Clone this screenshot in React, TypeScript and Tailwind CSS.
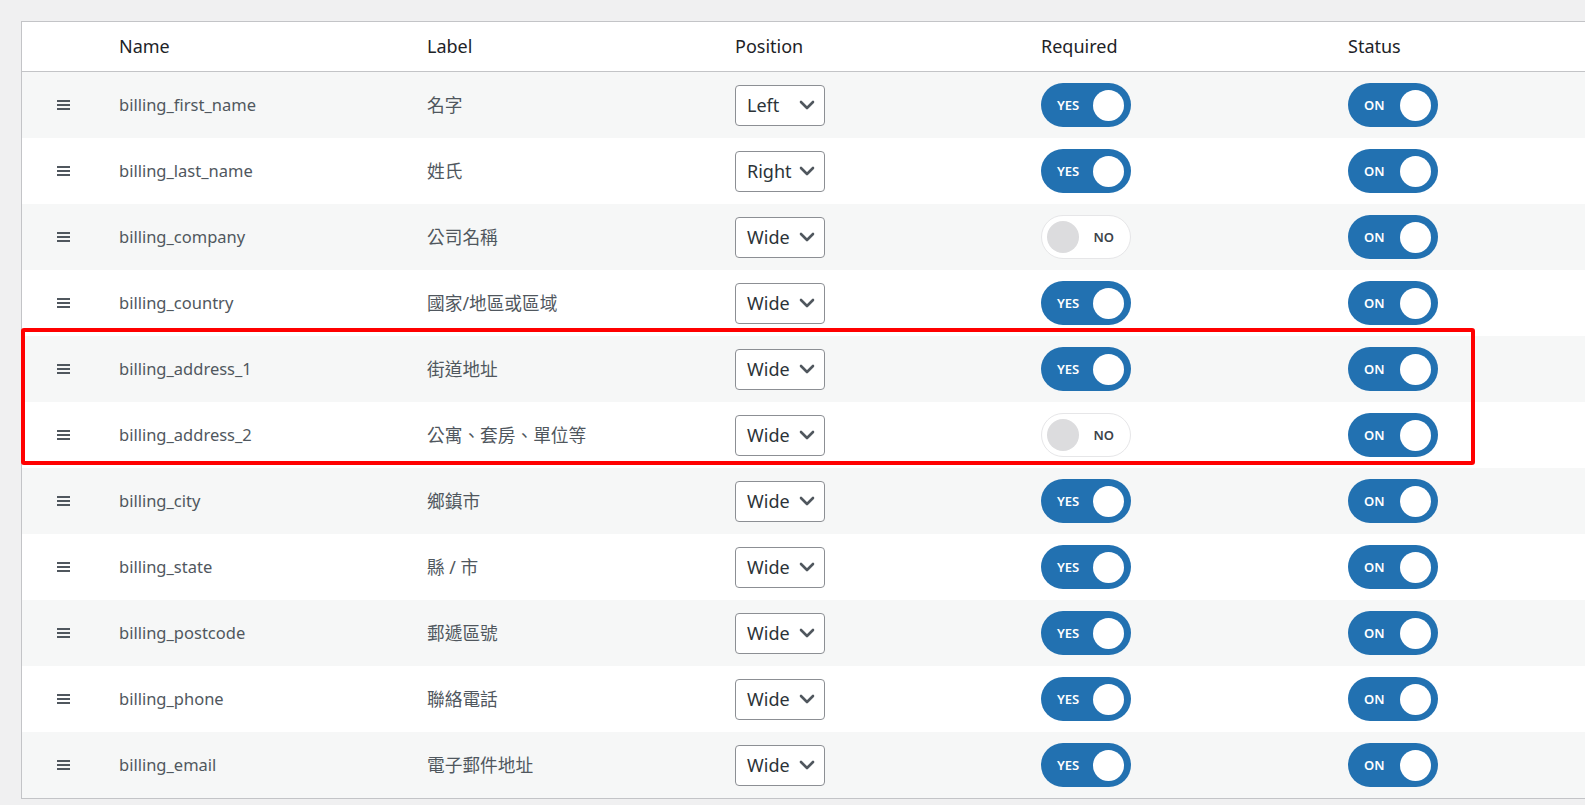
import React from "react";

type Row = { name: string; label: string; pos: string; req: boolean };

const rows: Row[] = [
  { name: "billing_first_name", label: "名字", pos: "Left", req: true },
  { name: "billing_last_name", label: "姓氏", pos: "Right", req: true },
  { name: "billing_company", label: "公司名稱", pos: "Wide", req: false },
  { name: "billing_country", label: "國家/地區或區域", pos: "Wide", req: true },
  { name: "billing_address_1", label: "街道地址", pos: "Wide", req: true },
  { name: "billing_address_2", label: "公寓、套房、單位等", pos: "Wide", req: false },
  { name: "billing_city", label: "鄉鎮市", pos: "Wide", req: true },
  { name: "billing_state", label: "縣 / 市", pos: "Wide", req: true },
  { name: "billing_postcode", label: "郵遞區號", pos: "Wide", req: true },
  { name: "billing_phone", label: "聯絡電話", pos: "Wide", req: true },
  { name: "billing_email", label: "電子郵件地址", pos: "Wide", req: true },
];

const font = { fontFamily: '"Segoe UI", "Noto Sans", "Noto Sans CJK TC", sans-serif' };

function Handle() {
  return (
    <div className="flex flex-col gap-[2px] w-[13px]">
      <div className="h-[2px] bg-[#50575e]" />
      <div className="h-[2px] bg-[#50575e]" />
      <div className="h-[2px] bg-[#50575e]" />
    </div>
  );
}

function Select({ value }: { value: string }) {
  return (
    <div className="flex items-center justify-between w-[90px] h-[41px] border border-[#8c8f94] rounded-[4px] bg-white pl-[11px] pr-[9px]">
      <span className="text-[18px] text-[#2c3338] leading-none">{value}</span>
      <svg width="16" height="10" viewBox="0 0 16 10" fill="none">
        <path d="M2 2 L8 8 L14 2" stroke="#50575e" strokeWidth="2.6" strokeLinecap="round" strokeLinejoin="round" />
      </svg>
    </div>
  );
}

function Toggle({ on, onText, offText }: { on: boolean; onText: string; offText: string }) {
  if (on) {
    return (
      <div className="flex items-center justify-between w-[90px] h-[44px] rounded-full bg-[#2271b1] pl-[16px] pr-[7px]">
        <span className="text-[13px] font-semibold text-white leading-none">{onText}</span>
        <div className="w-[31px] h-[31px] rounded-full bg-white" />
      </div>
    );
  }
  return (
    <div className="flex items-center justify-between w-[90px] h-[44px] rounded-full bg-white border border-[#e6e6e8] pl-[5px] pr-[16px]">
      <div className="w-[32px] h-[32px] rounded-full bg-[#dcdcde]" />
      <span className="text-[13px] font-semibold text-[#3c434a] leading-none">{offText}</span>
    </div>
  );
}

export default function App() {
  return (
    <div className="w-[1585px] h-[805px] overflow-hidden bg-[#f0f0f1] pl-[21px] pt-[21px]" style={font}>
      <div className="relative w-[1640px]">
        <div className="border border-[#c3c4c7] bg-white">
          <div className="flex items-center h-[50px] border-b border-[#c3c4c7] text-[18px] text-[#1d2327]">
            <div className="w-[85px]" />
            <div className="w-[308px] pl-[12px]">Name</div>
            <div className="w-[308px] pl-[12px]">Label</div>
            <div className="w-[306px] pl-[12px]">Position</div>
            <div className="w-[307px] pl-[12px]">Required</div>
            <div className="w-[308px] pl-[12px]">Status</div>
          </div>
          {rows.map((r, i) => (
            <div
              key={r.name}
              className={`flex items-center h-[66px] text-[#50575e] ${i % 2 === 0 ? "bg-[#f6f7f7]" : "bg-white"}`}
            >
              <div className="w-[85px] flex pl-[35px]">
                <Handle />
              </div>
              <div className="w-[308px] pl-[12px] text-[16.5px]">{r.name}</div>
              <div className="w-[308px] pl-[12px] text-[17.7px]">{r.label}</div>
              <div className="w-[306px] pl-[12px]">
                <Select value={r.pos} />
              </div>
              <div className="w-[307px] pl-[12px]">
                <Toggle on={r.req} onText="YES" offText="NO" />
              </div>
              <div className="w-[308px] pl-[12px]">
                <Toggle on={true} onText="ON" offText="OFF" />
              </div>
            </div>
          ))}
        </div>
        <div className="absolute left-0 top-[307px] w-[1454px] h-[137px] border-4 border-[#ff0000] rounded-[3px]" />
      </div>
    </div>
  );
}
